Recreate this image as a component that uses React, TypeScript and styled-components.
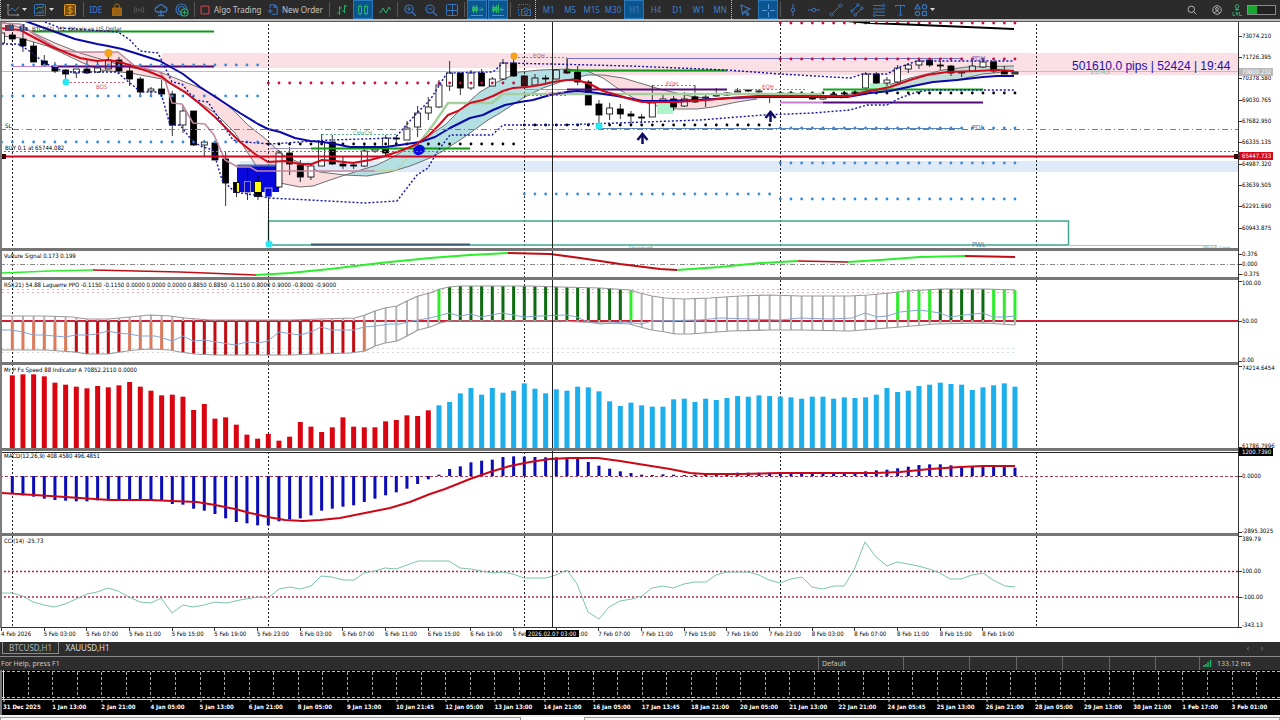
import React from "react";
import styled, { createGlobalStyle } from "styled-components";

const UI = '"Noto Sans", "Open Sans", sans-serif';
const CHART = '"DejaVu Sans Condensed", "DejaVu Sans", sans-serif';

const GlobalStyle = createGlobalStyle`
  * { box-sizing: border-box; }
  body { margin: 0; background: #fff; font-family: ${UI}; }
  button { font: inherit; color: inherit; border: 0; background: none; padding: 0; }
`;

/* ---------- page frame ---------- */

const Page = styled.div`
  display: flex;
  flex-direction: column;
  min-height: 100vh;
  overflow: hidden;
`;

const Toolbar = styled.header`
  display: flex;
  align-items: stretch;
  height: 19px;
  background: #2b2b2b;
  color: #3f7fd0;
  font-size: 8px;
  line-height: 19px;
`;

const Grip = styled.span`
  width: 3px;
  flex: none;
  border-left: 1px dotted #c8c8c8;
`;

const Divider = styled.span`
  width: 3px;
  flex: none;
  border: solid #2b2b2b;
  border-width: 2px 1px;
  background: #585858;
`;

const Group = styled.div<{ $width: number }>`
  display: grid;
  grid-auto-flow: column;
  grid-auto-columns: 1fr;
  justify-items: center;
  width: ${(p) => p.$width}px;
  flex: none;
`;

const Row = styled.div<{ $width: number }>`
  display: flex;
  align-items: center;
  padding-left: 3px;
  gap: 2px;
  width: ${(p) => p.$width}px;
  flex: none;
`;

const Tool = styled.button<{ $on?: boolean }>`
  display: flex;
  align-items: center;
  justify-content: center;
  width: 20px;
  height: 19px;
  white-space: nowrap;
  background: ${(p) => (p.$on ? "#0b568f" : "transparent")};
  box-shadow: ${(p) => (p.$on ? "inset 0 0 0 1px #2a78b8" : "none")};
`;

const DropTool = styled.button`
  display: flex;
  align-items: center;
  gap: 2px;
  width: 25px;
  height: 19px;
`;

const TextTool = styled.button<{ $width: number }>`
  display: flex;
  align-items: center;
  gap: 4px;
  padding-left: 4px;
  width: ${(p) => p.$width}px;
  flex: none;
  color: #c4c4c4;
  white-space: nowrap;
`;

const RightTools = styled.div`
  display: flex;
  align-items: center;
  gap: 5px;
  margin-left: auto;
  padding-right: 4px;
`;

const Charts = styled.main`
  border-top: 2px solid #bdbdbd;
  box-shadow: inset 0 1px #5a5a5a;
  padding-top: 1px;
  background: #fff;
`;

const Panel = styled.section<{ $height: number }>`
  display: grid;
  grid-template-columns: minmax(0, 1fr) 42px;
  grid-template-rows: minmax(0, 1fr);
  height: ${(p) => p.$height}px;
`;

const Plot = styled.div<{ $last?: boolean }>`
  min-height: 0;
  border-left: 2px solid #7c7c7c;
  border-bottom: ${(p) => (p.$last ? "1px solid #333" : "3px solid #757575")};
`;

const Scale = styled.div`
  min-height: 0;
  border-left: 1px solid #333;
`;

const Canvas = styled.svg<{ $free?: boolean }>`
  display: block;
  width: 100%;
  height: 100%;
  overflow: ${(p) => (p.$free ? "visible" : "hidden")};
`;

const Label = styled.text<{ $color?: string; $size?: number; $bold?: boolean; $arial?: boolean }>`
  font-family: ${(p) => (p.$arial ? '"Liberation Sans", sans-serif' : CHART)};
  font-size: ${(p) => p.$size ?? 6}px;
  font-weight: ${(p) => (p.$bold ? 700 : 400)};
  fill: ${(p) => p.$color ?? "#000"};
`;

const TimeAxis = styled.div`
  height: 14px;
`;

const Tabs = styled.nav`
  display: flex;
  align-items: stretch;
  height: 15px;
  padding: 0 16px 2px 2px;
  background: #2d2d2d;
  border-bottom: 1px solid #8a8a8a;
  color: #d6d6d6;
  font-size: 8px;
  line-height: 10px;
`;

const Tab = styled.button<{ $on?: boolean }>`
  width: 57px;
  border: ${(p) => (p.$on ? "1px solid #8c8c8c" : "0")};
  border-top-width: 0;
  color: ${(p) => (p.$on ? "#b4b4b4" : "#dedede")};
`;

const TabArrows = styled.div`
  display: flex;
  gap: 10px;
  margin-left: auto;
  color: #858585;
  button { width: 4px; }
`;

const Status = styled.footer`
  display: flex;
  height: 13px;
  background: #2d2d2d;
  color: #c4c4c4;
  font-size: 7px;
  line-height: 13px;
`;

const Cell = styled.span<{ $width?: number }>`
  display: flex;
  align-items: center;
  gap: 5px;
  flex: ${(p) => (p.$width ? `0 0 ${p.$width}px` : "1 1 auto")};
  padding-left: ${(p) => (p.$width ? 3 : 1)}px;
  border-left: ${(p) => (p.$width ? "1px solid #666" : "0")};
`;

const LowerChart = styled.section`
  height: 45px;
  background: #000;
  border-left: 2px solid #777;
`;

const BottomEdge = styled.div`
  display: grid;
  grid-template-columns: 521px 63px 1fr;
  flex: 1 0 5px;
  padding-top: 2px;
  background: #f1f1ee;
`;

const EdgeTab = styled.span<{ $blank?: boolean }>`
  background: ${(p) => (p.$blank ? "#fff" : "#f6f6f4")};
  border: ${(p) => (p.$blank ? "0" : "1px solid #999")};
  border-bottom: 0;
`;

/* ---------- icons ---------- */

const BLUE = "#3a74bf";
const GREEN = "#25b36b";

function Icon({ children, size = 14, color = BLUE, width = 1 }: {
  children: React.ReactNode; size?: number; color?: string; width?: number;
}) {
  return (
    <svg width={size} height={size} viewBox="0 0 14 14" fill="none" stroke={color} strokeWidth={width} aria-hidden="true">
      {children}
    </svg>
  );
}

const Caret = () => (
  <svg width="5" height="3" viewBox="0 0 5 3" aria-hidden="true"><path d="M0 0h5L2.5 3z" fill="#d8d8d8" /></svg>
);

const icons = {
  line: <Icon color="#8d8d8d"><path d="M2 1v11h11M1 3l1-2 1 2M11 11l2 1-2 1" /><path stroke={BLUE} d="M3 8l3-3 3 3 4-4" /></Icon>,
  indicator: <Icon><rect x="1.500" y="1.500" width="11" height="11" rx="1" /><path stroke={GREEN} d="M3 6l3-2 2 1 3-2" /><path d="M4 11V9M6 11V8M8 11V8M10 11V6" /></Icon>,
  dollar: <Icon color="#e39a1c"><rect x="1.500" y="1.500" width="11" height="11" rx="1" fill="#7a4f0a" /><path d="M9.500 4.800C9 4 5 3.600 5 5.500s4.300 1 4.300 3S5 10.300 4.500 9.200M7 2.800v8.400" /></Icon>,
  bag: <Icon color="#a8690f"><path d="M2.500 5h9v7.500h-9z" fill="#9a6212" /><path d="M4.500 7V3.500a2.500 2.500 0 015 0V7" /></Icon>,
  signal: <Icon size={12} color="#5e5e5e"><circle cx="7" cy="7" r="1" /><path d="M4.500 4.500a4 4 0 000 5M9.500 4.500a4 4 0 010 5M2.500 3.500a6 6 0 000 7M11.500 3.500a6 6 0 010 7" /></Icon>,
  cloud: <Icon width={1.3}><path d="M3.500 9a2.500 2.500 0 01.2-5 3.500 3.500 0 016.600 0 2.500 2.500 0 01.2 5zM7 7v5M4 12.500h6" /></Icon>,
  globe: <Icon width={1.2}><circle cx="6.500" cy="6.500" r="5.500" /><circle cx="6.500" cy="6.500" r="3" /><circle cx="9.500" cy="9.500" r="3.500" stroke={GREEN} fill="#2b2b2b" /><path stroke={GREEN} d="M9.500 7.500v4M7.500 9.500h4" /></Icon>,
  algo: <Icon size={10} color="#b84048" width={1.8}><rect x="1.500" y="1.500" width="11" height="11" rx="1" /></Icon>,
  order: <Icon size={11} width={1.4}><path d="M4 5V1h6l3 3v9H6M9 1v3h4M1 9h6M4 6v6" /></Icon>,
  bars: <Icon color={GREEN}><path d="M4.500 3v9M2 10h2.500M4.500 5H7M9.500 2v8M7 8h2.500M9.500 3H12" /></Icon>,
  candles: <Icon color={GREEN}><rect x="2.500" y="3.500" width="3" height="7" /><rect x="8.500" y="3.500" width="3" height="7" /><path d="M4 1.500v2M4 10.500v2M10 1.500v2M10 10.500v2" /></Icon>,
  zigzag: <Icon color={GREEN}><path d="M1 9h2l2-4 3 5 3-6 1.500 3" /></Icon>,
  zoomIn: <Icon width={1.2}><circle cx="6" cy="6" r="4" /><path d="M9 9l4 4M4 6h4M6 4v4" /></Icon>,
  zoomOut: <Icon width={1.2}><circle cx="6" cy="6" r="4" /><path d="M9 9l4 4M4 6h4" /></Icon>,
  tiles: <Icon><rect x="1.500" y="1.500" width="11" height="11" rx="1" /><path d="M7.500 1.500v11M1.500 7.500h11" /></Icon>,
  shift: <Icon color={GREEN}><path d="M3.500 2v8M6.500 2v8M2.500 4h2v4h-2zM5.500 4h2v4h-2zM9 6.500h4M11 4.500l2 2-2 2" /><path stroke="#4b93dc" d="M1 12.500h12" /></Icon>,
  scroll: <Icon color={GREEN}><path d="M2.500 2v8M5.500 2v8M1.500 4h2v4h-2zM4.500 4h2v4h-2zM9 6.500h4M11 4.500l-2 2 2 2M7.500 1v9" /><path stroke="#4b93dc" d="M1 12.500h12" /></Icon>,
  camera: <Icon><path d="M1.500 7V1.500h11V5M1.500 7v5.500h2" strokeDasharray="1 1" /><path d="M4.500 6.500h2L7.500 5h2l1 1.500h3v6h-9z" /><circle cx="9" cy="9.500" r="1.800" /></Icon>,
  cursor: <Icon width={1.2}><path d="M3 2l9 4-4 1.500 3 4-1.500 1-3-4-2 3z" /></Icon>,
  cross: <Icon color="#5a9be0"><path d="M7.500 1v5M7.500 9v5M1 7.500h5M9 7.500h5" /></Icon>,
  vline: <Icon><path d="M7 1v4M7 9v4" /><circle cx="7" cy="7" r="1.800" /></Icon>,
  hline: <Icon><path d="M1 7h4M9 7h4" /><circle cx="7" cy="7" r="1.800" /></Icon>,
  trend: <Icon><circle cx="2.500" cy="11.500" r="1.500" /><circle cx="11.500" cy="2.500" r="1.500" /><path d="M3.500 10.500l7-7" /></Icon>,
  channel: <Icon><circle cx="2" cy="8" r="1.200" /><circle cx="8" cy="2" r="1.200" /><path d="M3 7l4-4M6 11l5-5" /><circle cx="5.200" cy="12" r="1.200" /><circle cx="12" cy="5.200" r="1.200" /></Icon>,
  fibo: <Icon><path d="M1 2.500h9M1 6h12M1 9h12M4 12.500h9" /><circle cx="11.500" cy="2.500" r="1.200" /><circle cx="2.500" cy="12.200" r="1.200" /></Icon>,
  text: <Icon><path d="M2.500 4V2.500h9V4M7.500 2.500v9.500M5.500 12h4" /></Icon>,
  shapes: <Icon width={1.2}><path d="M3.500 1.500L6 6H1z" /><circle cx="10.500" cy="3.800" r="2.200" /><circle cx="3.500" cy="10.500" r="2.200" /><rect x="8.500" y="8.500" width="4" height="4" /></Icon>,
  search: <Icon size={10} color="#bdbdbd" width={1.3}><circle cx="6" cy="6" r="4.500" /><path d="M9.500 9.500L13 13" /></Icon>,
  user: <Icon size={10} color="#bdbdbd" width={1.3}><circle cx="7" cy="7" r="6" /><circle cx="7" cy="5.500" r="2" /><path d="M3.500 11.500c1-4 6-4 7 0" /></Icon>,
};

/* ---------- chart data ---------- */

type Pt = [number, number];
const barX = (i: number) => 12.3 + (i * 32) / 3;
const pts = (a: Pt[]) => a.map((p) => p.join(",")).join(" ");

// index, body top, body bottom, wick top, wick bottom, fill
type Candle = [number, number, number, number, number, string];
const K = "#000", W = "#fff";
const candles: Candle[] = [
  [-1, 33, 43, 30, 44, W], [0, 35, 39, 33, 42, K], [1, 39, 46, 33, 52, K], [2, 46, 62, 42, 62, K], [3, 61, 65, 55, 66, K],
  [4, 66, 71, 62, 73, K], [5, 70, 74, 69, 82, K], [6, 69, 73, 69, 78, W], [7, 69, 73, 60, 74, K], [8, 68, 72, 60, 73, W],
  [9, 60, 69, 53, 69, "#f6c9cd"], [10, 60, 71, 57, 74, K], [11, 71, 79, 64, 86, K], [12, 79, 92, 77, 96, K], [13, 89, 91, 87, 97, W],
  [14, 89, 94, 80, 96, K], [15, 94, 125, 91, 136, K], [16, 111, 125, 105, 133, W], [17, 111, 145, 111, 146, K], [18, 142, 145, 140, 157, W],
  [19, 143, 160, 141, 160, K], [20, 159, 183, 152, 206, K], [25, 153, 187, 150, 188, W], [26, 153, 164, 147, 175, K], [27, 165, 177, 160, 182, K],
  [28, 166, 177, 164, 180, W], [29, 142, 166, 134, 166, W], [30, 142, 164, 135, 165, K], [31, 164, 166, 156, 169, K], [32, 165, 166, 163, 169, K],
  [33, 151, 166, 145, 167, W], [34, 149, 151, 145, 153, W], [35, 138, 149, 135, 155, W], [35, 148, 153, 148, 155, K], [36, 138, 139, 136, 143, K],
  [37, 128, 140, 121, 140, W], [38, 113, 127, 106, 137, W], [39, 107, 113, 97, 120, W], [40, 85, 107, 80, 108, W], [41, 73, 86, 61, 91, W],
  [42, 73, 88, 73, 95, K], [43, 73, 88, 70, 90, W], [44, 73, 86, 69, 86, K], [45, 79, 86, 77, 86, W], [46, 63, 79, 59, 80, W],
  [47, 63, 76, 58, 77, K], [48, 76, 86, 75, 86, "#3a1018"], [49, 78, 85, 74, 86, "#bfe3e6"], [50, 78, 79, 75, 83, K], [51, 70, 79, 69, 79, "#c8eaec"],
  [52, 70, 73, 58, 74, "#3a1018"], [53, 72, 82, 66, 85, K], [54, 82, 105, 80, 105, K], [55, 104, 115, 100, 125, K], [56, 108, 114, 103, 120, W],
  [57, 109, 114, 104, 119, K], [58, 114, 116, 111, 125, K], [59, 117, 117, 114, 123, K], [60, 103, 117, 85, 117, W], [61, 99, 101, 94, 103, W],
  [62, 99, 107, 96, 111, K], [63, 99, 106, 92, 107, W], [64, 97, 102, 85, 103, K], [65, 97, 98, 95, 107, W], [66, 95, 96, 88, 97, W],
  [67, 93, 95, 92, 96, K], [68, 91, 92, 88, 92, W], [69, 90, 91, 89, 92, K], [70, 91, 92, 89, 93, W], [71, 96, 97, 95, 103, K],
  [72, 93, 94, 91, 95, W], [73, 93, 94, 91, 95, W], [74, 94, 95, 92, 96, K], [75, 97, 99, 95, 100, K], [76, 97, 99, 95, 100, W],
  [77, 94, 95, 92, 96, W], [78, 93, 94, 91, 96, W], [79, 92, 93, 90, 94, W], [80, 74, 88, 72, 90, W], [81, 74, 83, 72, 84, K],
  [82, 80, 83, 77, 86, W], [83, 68, 82, 65, 83, W], [84, 65, 69, 63, 73, W], [85, 61, 65, 60, 69, W], [86, 60, 65, 59, 67, K],
  [87, 65, 66, 61, 70, K], [88, 66, 73, 65, 76, K], [89, 72, 73, 71, 77, W], [90, 66, 71, 58, 72, "#cfe6e2"], [91, 62, 67, 60, 68, W],
  [92, 62, 71, 61, 73, K], [93, 71, 74, 66, 74, K], [94, 72, 74, 72, 74, "#666"],
];

const blueMa: Pt[] = [[25, 21], [50, 30], [75, 39], [97, 44], [108, 46], [122, 49], [135, 53], [160, 61], [183, 74], [200, 87], [217, 98], [240, 113], [258, 124], [268, 129], [280, 132], [295, 138], [310, 141], [323, 142], [335, 144], [350, 147], [365, 147], [385, 147], [400, 145], [420, 142], [435, 137], [450, 128], [470, 118], [483, 115], [493, 110], [505, 105], [520, 102], [533, 100], [550, 95], [567, 92], [577, 91], [590, 92], [617, 96], [643, 101], [663, 101], [697, 100], [730, 98], [763, 97], [813, 97], [847, 97], [870, 93], [890, 91], [913, 86], [933, 82], [957, 80], [983, 77], [997, 76], [1014, 76]];
const redMa: Pt[] = [[0, 28], [20, 30], [35, 38], [50, 46], [67, 53], [80, 58], [97, 61], [108, 60], [120, 62], [135, 67], [150, 72], [162, 77], [170, 83], [185, 92], [200, 104], [215, 117], [228, 130], [240, 142], [255, 154], [268, 162], [285, 161], [300, 164], [312, 164], [322, 160], [335, 161], [353, 163], [370, 160], [385, 156], [400, 151], [415, 145], [428, 136], [439, 125], [448, 115], [458, 111], [470, 103], [483, 100], [493, 96], [503, 91], [513, 88], [527, 87], [540, 85], [553, 82], [567, 80], [577, 80], [590, 84], [603, 91], [617, 95], [630, 99], [642, 102], [657, 102], [677, 102], [707, 100], [730, 98], [757, 96], [850, 96], [870, 91], [890, 87], [910, 80], [927, 75], [947, 72], [977, 71], [997, 70], [1014, 71]];
const mauve: Pt[] = [[2, 23], [20, 24], [40, 38], [60, 50], [75, 52], [118, 52], [135, 66], [160, 72], [165, 80], [172, 103], [182, 104], [193, 123], [205, 124], [214, 135], [225, 160], [238, 167], [250, 167], [257, 171], [375, 171]];
const paleGreen: Pt[] = [[420, 142], [433, 125], [448, 103], [492, 103], [503, 94], [823, 94]];
const upperA: Pt[] = [[2, 22], [27, 30], [55, 43], [80, 53], [110, 62], [133, 68], [160, 72], [180, 80], [200, 88], [217, 97], [233, 110], [248, 125], [267, 140], [283, 155], [300, 163], [320, 172], [345, 175]];
const lowerA: Pt[] = [[2, 36], [20, 38], [47, 46], [60, 52], [83, 63], [100, 70], [130, 73], [162, 79], [185, 93], [215, 113], [235, 133], [257, 167], [267, 177], [280, 183], [300, 187], [313, 186], [333, 179], [345, 175]];
const upperB: Pt[] = [[345, 175], [377, 165], [393, 157], [413, 145], [430, 135], [445, 125], [463, 107], [480, 92], [497, 82], [520, 72], [540, 70], [567, 69], [587, 71], [596, 75]];
const lowerB: Pt[] = [[345, 175], [367, 176], [390, 172], [410, 166], [430, 158], [443, 151], [463, 138], [488, 120], [500, 113], [523, 98], [543, 88], [563, 81], [587, 75], [596, 75]];
const upperC: Pt[] = [[596, 75], [603, 75], [623, 78], [643, 84], [663, 90], [690, 96], [713, 99], [757, 97]];
const lowerC: Pt[] = [[596, 75], [603, 78], [620, 90], [637, 100], [657, 106], [677, 109], [697, 109], [713, 107], [737, 102], [757, 99]];
const upperD: Pt[] = [[840, 96], [870, 90], [895, 83], [910, 78], [927, 74], [943, 70], [967, 67], [1014, 66]];
const lowerD: Pt[] = [[840, 98], [870, 93], [890, 91], [913, 86], [933, 82], [957, 80], [983, 74], [1014, 71]];
const dottedUp: Pt[] = [[45, 22], [60, 28], [118, 32], [130, 40], [140, 51], [158, 53], [163, 63], [172, 82], [182, 84], [195, 100], [208, 102], [220, 120], [233, 140], [245, 142], [270, 144], [300, 142], [330, 140], [395, 138], [408, 123], [417, 113], [430, 100], [447, 73], [493, 72], [503, 63], [550, 64], [630, 66], [727, 70], [780, 74], [850, 78], [863, 74], [887, 74], [900, 67], [917, 61], [1014, 61]];
const dottedLow: Pt[] = [[2, 44], [18, 44], [28, 50], [37, 57], [45, 63], [55, 68], [65, 72], [117, 72], [125, 79], [135, 87], [140, 92], [160, 92], [163, 100], [170, 125], [180, 125], [190, 138], [200, 146], [213, 150], [222, 180], [235, 192], [260, 196], [268, 198], [310, 200], [365, 203], [397, 201], [417, 175], [428, 168], [437, 152], [450, 135], [492, 135], [503, 125], [560, 125], [617, 123], [700, 120], [763, 115], [813, 113], [850, 110], [867, 105], [887, 105], [900, 98], [917, 92], [930, 90], [1014, 90]];

const SKY = "#3a8ad8", CRIMSON = "#c40f3c";
// y, first bar, last bar, colour
const dotRows: [number, number, number, string][] = [
  [65, 0, 23, SKY], [96, -1, 23, SKY], [142, -1, 23, SKY], [83, 24, 47, CRIMSON], [144, 24, 47, K], [125, 48, 71, K], [194, 48, 71, SKY],
  [23, 72, 94, CRIMSON], [59, 72, 94, CRIMSON], [93, 72, 94, K], [128, 72, 94, SKY], [163, 72, 94, SKY], [199, 72, 94, SKY],
];

// x1, x2, y, colour, thickness
const levels: [number, number, number, string, number][] = [
  [12, 58, 66, "#c77fd0", 1], [58, 214, 66, "#520a78", 2], [30, 214, 31, "#0f9a14", 2], [270, 311, 148, "#9d93b8", 1], [311, 470, 148, "#0f9a14", 2],
  [524, 567, 89, "#c77fd0", 1], [567, 727, 89, "#520a78", 2], [567, 727, 70, "#0f9a14", 2], [780, 823, 102, "#c77fd0", 2], [823, 983, 102, "#520a78", 2],
  [823, 983, 89, "#0fa814", 2], [567, 963, 58, "#7a6fc4", 1], [596, 963, 128, "#5a84b4", 1], [1068, 1217, 245, "#9ccfc4", 1],
];

const LIME = "#2dee2d", DARK = "#0c6b10", GRAY = "#b4b4b4", RED = "#c00d14", SALMON = "#dd7a5c";
const rsiColor = (i: number) => {
  if (i < 6 || (i > 10 && i < 16) || i === 33) return SALMON;
  if (i < 33) return RED;
  if (i < 40 || (i > 58 && i < 83)) return GRAY;
  if (i === 40 || i === 58 || (i > 82 && i < 87) || i > 91) return LIME;
  return DARK;
};
const rsiUpper: Pt[] = [[2, 316], [45, 316], [72, 317], [87, 319], [108, 319], [130, 317], [150, 315], [170, 316], [185, 318], [210, 320], [290, 320], [320, 319], [355, 318], [365, 315], [375, 311], [385, 308], [397, 306], [407, 301], [418, 296], [430, 293], [440, 289], [449, 287], [460, 286], [530, 286], [560, 287], [600, 288], [630, 290], [640, 293], [652, 296], [665, 298], [683, 299], [710, 298], [740, 296], [770, 295], [800, 296], [850, 296], [868, 295], [890, 293], [905, 291], [925, 290], [940, 289], [985, 289], [1015, 290]];
const rsiLower: Pt[] = [[2, 350], [45, 350], [75, 352], [87, 354], [108, 354], [120, 352], [135, 350], [150, 349], [170, 350], [180, 352], [195, 354], [215, 355], [290, 355], [320, 354], [350, 353], [365, 351], [375, 346], [385, 343], [397, 341], [407, 336], [418, 330], [430, 327], [440, 323], [449, 321], [560, 321], [580, 322], [630, 324], [640, 327], [652, 330], [665, 332], [675, 334], [690, 334], [730, 331], [765, 330], [800, 330], [850, 331], [875, 329], [900, 327], [935, 324], [985, 323], [1015, 325]];
const rsiLine: Pt[] = [[2, 330], [12, 330], [23, 332], [33, 335], [44, 335], [65, 337], [76, 335], [87, 335], [97, 334], [108, 331], [118, 333], [129, 334], [140, 336], [155, 336], [163, 338], [172, 341], [183, 336], [193, 341], [204, 340], [235, 345], [247, 342], [258, 343], [268, 341], [279, 332], [300, 335], [311, 332], [321, 327], [332, 330], [354, 330], [364, 327], [375, 326], [390, 324], [400, 324], [412, 321], [430, 318], [449, 313], [460, 316], [471, 314], [481, 317], [502, 313], [524, 317], [540, 316], [567, 315], [577, 317], [588, 322], [600, 324], [625, 322], [642, 324], [652, 321], [700, 320], [720, 318], [780, 320], [800, 318], [830, 319], [852, 318], [865, 313], [877, 317], [887, 316], [900, 312], [920, 310], [940, 313], [950, 317], [965, 315], [983, 313], [993, 317], [1005, 317], [1015, 316]];

const at = (line: Pt[], x: number) => {
  const k = Math.max(1, line.findIndex((p) => p[0] >= x));
  const [a, b] = [line[k - 1], line[k]];
  return a[1] + ((b[1] - a[1]) * (x - a[0])) / (b[0] - a[0]);
};

// bar heights in thirds of a pixel
const speed = [218, 221, 221, 215, 196, 190, 184, 179, 186, 182, 188, 198, 184, 172, 158, 160, 154, 114, 132, 88, 92, 70, 40, 28, 42, 22, 34, 78, 64, 48, 62, 92, 64, 62, 62, 80, 84, 98, 96, 113,
  128, 138, 164, 180, 160, 180, 166, 172, 194, 178, 164, 176, 172, 184, 182, 170, 140, 126, 136, 128, 124, 124, 146, 148, 138, 148, 144, 150, 156, 154, 158, 156, 154, 152, 148, 154, 154, 148, 152, 150,
  152, 160, 180, 168, 172, 186, 190, 196, 192, 190, 174, 182, 188, 194, 184];
const macd = [-51, -58, -62, -68, -72, -74, -76, -76, -73, -70, -70, -71, -70, -71, -72, -84, -86, -98, -104, -114, -127, -138, -142, -148, -148, -136, -130, -127, -118, -104, -98, -92, -88, -78, -68, -58, -49, -38, -24, -10,
  4, 21, 29, 41, 46, 49, 57, 59, 58, 57, 56, 56, 55, 53, 42, 31, 22, 14, 9, 4, 3, 5, 4, 3, 4, 5, 7, 8, 10, 10, 10, 10, 9, 9, 9, 8, 8, 8, 7, 7,
  14, 17, 19, 23, 28, 33, 35, 35, 32, 30, 29, 29, 28, 27, 25];
const signal: Pt[] = [[2, 493], [50, 496], [80, 498], [110, 500], [150, 500], [172, 501], [197, 502], [215, 505], [235, 509], [250, 513], [268, 517], [285, 520], [303, 521], [320, 520], [340, 518], [360, 514], [390, 508], [410, 502], [430, 494], [445, 489], [470, 479], [490, 472], [510, 466], [530, 462], [550, 459], [570, 458], [598, 458], [620, 461], [645, 465], [670, 469], [690, 473], [705, 474], [740, 474], [780, 473], [875, 473], [900, 472], [930, 469], [960, 467], [983, 466], [1015, 466]];
const cci: Pt[] = [[2, 593], [12, 593], [23, 596], [33, 602], [44, 605], [54, 607], [65, 604], [76, 599], [87, 594], [97, 592], [108, 588], [118, 591], [129, 597], [140, 602], [151, 603], [161, 598], [172, 613], [183, 605], [193, 607], [204, 605], [215, 602], [226, 603], [240, 600], [258, 597], [268, 598], [279, 589], [290, 587], [300, 589], [311, 586], [321, 576], [332, 577], [343, 580], [354, 580], [364, 573], [375, 571], [385, 568], [396, 569], [407, 565], [418, 561], [449, 561], [460, 568], [471, 569], [492, 573], [503, 572], [513, 574], [524, 578], [546, 578], [556, 575], [567, 570], [577, 584], [588, 612], [599, 619], [609, 607], [620, 601], [632, 599], [642, 596], [652, 588], [663, 586], [673, 588], [684, 584], [695, 582], [706, 582], [716, 575], [727, 572], [748, 572], [759, 575], [769, 580], [780, 583], [791, 579], [802, 577], [812, 587], [823, 589], [834, 586], [844, 586], [854, 570], [865, 542], [876, 557], [887, 566], [897, 562], [908, 564], [918, 566], [929, 569], [940, 573], [950, 579], [961, 579], [972, 575], [983, 573], [993, 580], [1005, 586], [1015, 587]];
const vulture: { color: string; width: number; p: Pt[] }[] = [
  { color: LIME, width: 1.5, p: [[2, 273], [50, 271], [93, 270]] },
  { color: RED, width: 1.5, p: [[93, 270], [180, 272], [256, 275]] },
  { color: LIME, width: 2.2, p: [[256, 275], [290, 273], [330, 269], [380, 263], [430, 258], [470, 255], [508, 253]] },
  { color: RED, width: 2.2, p: [[508, 253], [550, 254], [580, 258], [620, 264], [660, 269], [677, 270]] },
  { color: LIME, width: 2, p: [[677, 270], [720, 267], [760, 263], [798, 261]] },
  { color: RED, width: 1.5, p: [[798, 261], [848, 262]] },
  { color: LIME, width: 2, p: [[848, 262], [880, 260], [920, 257], [965, 256]] },
  { color: RED, width: 2, p: [[965, 256], [1015, 257]] },
];

const hours = ["03:00", "07:00", "11:00", "15:00", "19:00", "23:00"];
const times = ["4 Feb 2026", ...["5 Feb", "6 Feb", "7 Feb", "8 Feb"].flatMap((d) => hours.map((h) => `${d} ${h}`))].slice(0, 24);
const lowerTimes = "31 Dec 2025|1 Jan 13:00|2 Jan 21:00|4 Jan 05:00|5 Jan 13:00|6 Jan 21:00|8 Jan 05:00|9 Jan 13:00|10 Jan 21:45|12 Jan 05:00|13 Jan 13:00|14 Jan 21:00|16 Jan 05:00|17 Jan 13:45|18 Jan 21:00|20 Jan 05:00|21 Jan 13:00|22 Jan 21:00|24 Jan 05:45|25 Jan 13:00|26 Jan 21:00|28 Jan 05:00|29 Jan 13:00|30 Jan 21:00|1 Feb 17:00|3 Feb 01:00".split("|");

/* ---------- chart pieces ---------- */

function Rule({ y, color, dash, width = 1 }: { y: number; color: string; dash?: string; width?: number }) {
  return <line x1="0" x2="110%" y1={y} y2={y} stroke={color} strokeWidth={width} strokeDasharray={dash} />;
}

function Line({ p, color, width = 1, dash }: { p: Pt[]; color: string; width?: number; dash?: string }) {
  return <polyline points={pts(p)} fill="none" stroke={color} strokeWidth={width} strokeDasharray={dash} strokeLinejoin="round" />;
}

const Days = () => (
  <>
    {[12, 268, 524, 780, 1036].map((x) => (
      <line key={x} x1={x + 0.5} x2={x + 0.5} y1="20" y2="628" stroke="#222" strokeDasharray="2 2" />
    ))}
  </>
);

interface Tick { y: number; text: string; box?: string; dy?: number }

function ChartPanel({ top, height, ticks, title, last, children }: {
  top: number; height: number; ticks: Tick[]; title?: string; last?: boolean; children: React.ReactNode;
}) {
  return (
    <Panel $height={height}>
      <Plot $last={last}>
        <Canvas role="img" aria-label={title ?? "Price chart"}>
          <g transform={`translate(-2 ${-top})`}>
            {children}
            {title && <Label x="4" y={top + 7}>{title}</Label>}
            <line x1="552.5" x2="552.5" y1="20" y2="628" stroke="#222" />
          </g>
        </Canvas>
      </Plot>
      <Scale>
        <Canvas $free>
          <g transform={`translate(0 ${-top})`}>
            {ticks.map((t) => (
              <g key={t.text}>
                {t.box ? <rect x="0" y={t.y - 4} width="34" height="8" fill={t.box} /> : <path d={`M0 ${t.y + 0.5}h3`} stroke="#333" />}
                <Label x="3" y={t.y + 2 + (t.dy ?? 0)} $color={t.box ? "#fff" : undefined}>{t.text}</Label>
              </g>
            ))}
          </g>
        </Canvas>
      </Scale>
    </Panel>
  );
}

function PriceChart() {
  const cloud = (u: Pt[], l: Pt[], fill: string) => (
    <>
      <polygon points={pts([...u, ...[...l].reverse()])} fill={fill} />
      <Line p={u} color="#6e6e6e" />
      <Line p={l} color="#6e6e6e" />
    </>
  );
  return (
    <>
      <rect x="162" y="53" width="100%" height="15" fill="#fadfe5" />
      <rect x="567" y="58" width="100%" height="17" fill="#fadfe5" />
      <rect x="240" y="161" width="100%" height="11" fill="#deeaf8" />
      <Rule y={71.5} color="#b9c2bd" />
      <polygon points={pts([...mauve.slice(0, 9), [150, 76], [100, 68], [60, 50], [2, 30]])} fill="#fbdde0" />
      {cloud(upperA, lowerA, "#fbdde0")}
      {cloud(upperB, lowerB, "#b4dfe3")}
      {cloud(upperC, lowerC, "#fbdde0")}
      {cloud(upperD, lowerD, "#c3dcd8")}
      <rect x="657" y="103" width="16" height="11" fill="#aef5cb" />
      <rect x="870" y="83" width="20" height="6" fill="#aef5cb" />
      <Days />
      <rect x="237" y="165" width="42" height="27" fill="#0808dc" />
      <path d="M237 165.500h42" stroke="#4a6fa8" strokeWidth="2" />

      <rect x="268.500" y="221" width="800" height="24" fill="none" stroke="#3fa58c" strokeWidth="1.500" />
      <path d="M311 244.500h159" stroke="#36586a" strokeWidth="2" />
      <path d="M567.500 58v12" stroke="#7a6fc4" />

      {candles.map(([i, t, b, wt, wb, fill], k) => (
        <g key={k} stroke="#000">
          <line x1={barX(i)} x2={barX(i)} y1={wt} y2={wb} strokeWidth="0.800" />
          <rect x={barX(i) - 3} y={t} width="6" height={Math.max(1, b - t)} fill={fill} strokeWidth={0.8} />
        </g>
      ))}
      <g stroke="#000" strokeWidth="0.800">
        <path d="M236.500 192v5M247.500 168v32M258 176v24M268.500 197v47" />
        <rect x="233.500" y="182.500" width="3" height="10" fill="#000" />
        <rect x="236.500" y="182.500" width="3" height="10" fill="#ff0" />
        <rect x="244.500" y="181.500" width="6" height="11" fill="#0808dc" stroke="#aab" />
        <rect x="254.500" y="181.500" width="7" height="11" fill="#ff0" />
        <rect x="254.500" y="192.500" width="7" height="4" fill="#000" />
        <rect x="265" y="188" width="7" height="9" fill="#0808dc" stroke="#dde" />
      </g>

      {levels.map(([a, b, y, c, w], k) => <path key={k} d={`M${a} ${y + 0.5}H${b}`} stroke={c} strokeWidth={w} />)}
      {dotRows.map(([y, a, b, c]) =>
        Array.from({ length: b - a + 1 }, (_, k) => <circle key={`${y}-${k}`} cx={barX(a + k)} cy={y} r="1.400" fill={c} />),
      )}
      <Line p={[[375, 171], [397, 170], [405, 160], [420, 142]]} color="#c3cf8c" />
      <Line p={paleGreen} color="#a6cfa0" width={2.5} />
      <Line p={mauve} color="#c287a0" width={1.6} />
      <Line p={dottedUp} color="#1414a8" width={1.4} dash="2 2" />
      <Line p={dottedLow} color="#1414a8" width={1.4} dash="2 2" />
      <ellipse cx="419" cy="150" rx="6" ry="5" fill="#0a0ae0" transform="rotate(-25 419 150)" />
      <Line p={blueMa} color="#0a0aa8" width={2} />
      <Line p={redMa} color="#d40a1c" width={2} />
      <Line p={[[835, 20], [870, 23], [920, 25], [1014, 29]]} color="#000" width={2} />

      <Rule y={129.5} color="#b06a5c" dash="6 3 1 3" />
      <Rule y={151.5} color="#5e8a3a" dash="2 2" />
      <Rule y={156.5} color="#cc0a22" width={2} />
      <rect x="2" y="154" width="4" height="5" fill="#3a0508" />
      <svg x="100%" overflow="visible"><rect x="-2" y="154" width="4" height="5" fill="#3a0508" /></svg>

      <g strokeDasharray="2 2" stroke="#c8687a">
        <path d="M66 82.500h60M514 57.500h53M653 85.500h42M735 89.500h70M524 95.500h43" />
        <path d="M322 134.500h75" stroke="#5cae8c" />
      </g>
      <circle cx="108.500" cy="53" r="4" fill="#f5a21a" />
      <circle cx="514" cy="56" r="3.500" fill="#f5a21a" />
      {[[66, 82], [599, 126], [269, 244]].map(([x, y]) => <circle key={x} cx={x} cy={y} r="3.500" fill="#25e8f2" />)}
      {[[642, 133], [770, 111]].map(([x, y]) => (
        <path key={x} d={`M${x + 0.5} ${y + 11}v-9m-5 5l5-6l5 6`} fill="none" stroke="#120a68" strokeWidth="2.500" />
      ))}

      <Label x="96" y="89" $color="#cf5268">BOS</Label>
      <Label x="533" y="58" $color="#cf5268">EQH</Label>
      <Label x="666" y="86" $color="#cf5268">EQH</Label>
      <Label x="762" y="89" $color="#cf5268">EQH</Label>
      <Label x="545" y="95" $color="#d48aa0">CHoCH</Label>
      <Label x="353" y="135" $color="#4fa888">CHoCH</Label>
      <Label x="972" y="61" $size={7} $color="#5a62b8">PDH</Label>
      <Label x="972" y="130" $size={7} $color="#3f74ac">PDL</Label>
      <Label x="972" y="247" $size={7} $color="#3878a0">PWL</Label>
      <Label x="629" y="250" $color="#4fa888">Discount</Label>
      <Label x="1203" y="250" $color="#4fa888">Week Low</Label>
      <Label x="1090" y="74" $size={8} $arial $color="#86c49a">19:43</Label>
      <Label x="1072" y="70" $size={12} $arial $color="#1d0fae">501610.0 pips | 52424 | 19:44</Label>

      <g>
        <rect x="5" y="25" width="9" height="6" fill="#2b5684" />
        <path d="M5 26h4M5 28h4M5 30h9" stroke="#b01828" />
        <path d="M20.500 31v-5M23.500 31v-7M26.500 31v-4" stroke="#24407c" strokeWidth="2" />
      </g>
      <Label x="32" y="31" $color="#223">BTCUSD, H1:  Bitcoin vs US Dollar</Label>
      <Label x="5" y="128">SL</Label>
      <Label x="5" y="150">BUY 0.1 at 65744.082</Label>
    </>
  );
}

const priceTicks: Tick[] = [
  ...["73074.210", "71726.395", "70378.580", "69030.765", "67682.950", "66335.135", "64987.320", "63639.505", "62291.690", "60943.875"].map((text, i) => ({
    text, y: Math.round(35.5 + (i * 64) / 3),
  })),
  { y: 72, text: "70800.232", box: "#b8b8b8" },
  { y: 156, text: "65447.733", box: "#d8081c" },
];

const bars = Array.from({ length: 95 }, (_, i) => i);

function Toolbars() {
  return (
    <Toolbar>
      <Grip />
      <Row $width={79}>
        <DropTool aria-label="Line studies">{icons.line}<Caret /></DropTool>
        <DropTool aria-label="Indicators">{icons.indicator}<Caret /></DropTool>
        <Tool aria-label="Quotes">{icons.dollar}</Tool>
      </Row>
      <Divider />
      <Group $width={108}>
        <Tool>IDE</Tool>
        <Tool aria-label="Market">{icons.bag}</Tool>
        <Tool aria-label="Signals">{icons.signal}</Tool>
        <Tool aria-label="Cloud">{icons.cloud}</Tool>
        <Tool aria-label="Virtual hosting">{icons.globe}</Tool>
      </Group>
      <Divider />
      <TextTool $width={67}>{icons.algo}Algo Trading</TextTool>
      <TextTool $width={65}>{icons.order}New Order</TextTool>
      <Divider />
      <Group $width={65}>
        <Tool aria-label="Bar chart">{icons.bars}</Tool>
        <Tool $on aria-label="Candlesticks">{icons.candles}</Tool>
        <Tool aria-label="Line chart">{icons.zigzag}</Tool>
      </Group>
      <Divider />
      <Group $width={64}>
        <Tool aria-label="Zoom in">{icons.zoomIn}</Tool>
        <Tool aria-label="Zoom out">{icons.zoomOut}</Tool>
        <Tool aria-label="Tile windows">{icons.tiles}</Tool>
      </Group>
      <Divider />
      <Group $width={43}>
        <Tool $on aria-label="Auto scroll">{icons.shift}</Tool>
        <Tool $on aria-label="Chart shift">{icons.scroll}</Tool>
      </Group>
      <Divider />
      <Group $width={23}><Tool aria-label="Screenshot">{icons.camera}</Tool></Group>
      <Grip />
      <Group $width={193}>
        {["M1", "M5", "M15", "M30", "H1", "H4", "D1", "W1", "MN"].map((t) => <Tool key={t} $on={t === "H1"}>{t}</Tool>)}
      </Group>
      <Grip />
      <Group $width={45}>
        <Tool aria-label="Cursor">{icons.cursor}</Tool>
        <Tool $on aria-label="Crosshair">{icons.cross}</Tool>
      </Group>
      <Divider />
      <Group $width={129}>
        <Tool aria-label="Vertical line">{icons.vline}</Tool>
        <Tool aria-label="Horizontal line">{icons.hline}</Tool>
        <Tool aria-label="Trendline">{icons.trend}</Tool>
        <Tool aria-label="Channel">{icons.channel}</Tool>
        <Tool aria-label="Fibonacci">{icons.fibo}</Tool>
        <Tool aria-label="Text">{icons.text}</Tool>
      </Group>
      <Row $width={28}><DropTool aria-label="Shapes">{icons.shapes}<Caret /></DropTool></Row>
      <RightTools>
        <Tool aria-label="Search">{icons.search}</Tool>
        <Tool aria-label="Account">{icons.user}</Tool>
        <svg width="10" height="12" viewBox="0 0 10 12" aria-label="Level" role="img">
          <circle cx="5" cy="2.500" r="1.800" fill="none" stroke={GREEN} /><path d="M5 4v3M3 5.500h4" stroke={GREEN} />
          <path d="M1 8v3.500h2M4 8l1 3.500L6 8M7.500 8v3.500H10" fill="none" stroke={GREEN} strokeWidth="0.900" />
        </svg>
        <svg width="29" height="10" viewBox="0 0 29 10" aria-label="Connection" role="img">
          <rect x="0.500" y="0.500" width="28" height="9" fill="#222" stroke="#8a8a8a" /><rect x="1" y="1" width="9" height="8" fill="#18a832" />
        </svg>
      </RightTools>
    </Toolbar>
  );
}

export default function App() {
  return (
    <Page>
      <GlobalStyle />
      <Toolbars />
      <Charts>
        <ChartPanel top={22} height={229} ticks={priceTicks}><PriceChart /></ChartPanel>

        <ChartPanel top={251} height={29} title="Vulture Signal 0.173 0.199"
          ticks={[{ y: 254, text: "0.376" }, { y: 264, text: "0.000" }, { y: 274, text: "-0.375" }]}>
          <Days />
          <Rule y={264.5} color="#8a8a8a" dash="5 2 1 2" />
          {vulture.map((v, k) => <Line key={k} p={v.p} color={v.color} width={v.width} />)}
        </ChartPanel>

        <ChartPanel top={280} height={85}
          title="RSI(21) 54.88 Laguerre PPO -0.1150 -0.1150 0.0000 0.0000 0.0000 0.8850 0.8850 -0.1150 0.8000 0.9000 -0.8000 -0.9000"
          ticks={[{ y: 281, text: "100.00", dy: 2 }, { y: 321, text: "50.00" }, { y: 361, text: "0.00", dy: -1 }]}>
          <path d="M2 289.500H1014M2 292.500H1014" stroke="#e3b4ba" strokeDasharray="2 3" />
          <path d="M2 348.500H1014M2 352.500H1014" stroke="#d3dcdc" strokeDasharray="2 3" />
          <Days />
          <Rule y={321} color="#cf2038" width={2} />
          {bars.map((i) => {
            const x = barX(i), u = at(rsiUpper, x), l = at(rsiLower, x), c = rsiColor(i);
            const up = c === LIME || c === DARK;
            return (
              <g key={i}>
                <rect x={x - 1} y={u} width="2" height={l - u} fill={GRAY} />
                {c !== GRAY && <rect x={x - 1.5} y={up ? u : 321} width="3" height={up ? Math.max(0, 320 - u) : Math.max(0, l - 321)} fill={c} />}
              </g>
            );
          })}
          <Line p={rsiUpper} color="#999" width={1.2} />
          <Line p={rsiLower} color="#999" width={1.2} />
          <Line p={rsiLine} color="#83a5d2" />
        </ChartPanel>

        <ChartPanel top={365} height={86} title="Mr P Fx Speed 88 Indicator A 70852.2110 0.0000"
          ticks={[{ y: 366, text: "74214.6454", dy: 2 }, { y: 447, text: "61786.7996", dy: -1 }]}>
          <Days />
          {bars.map((i) => (
            <rect key={i} x={barX(i) - 2.5} y={448 - speed[i] / 3} width="5" height={speed[i] / 3} fill={i < 40 ? "#d80410" : "#1daeec"} />
          ))}
        </ChartPanel>

        <ChartPanel top={451} height={85} title="MACD(12,26,9) 408.4580 496.4851"
          ticks={[{ y: 452, text: "1200.7390", box: "#000" }, { y: 476, text: "0.0000" }, { y: 532, text: "-2895.3025", dy: -1 }]}>
          <Days />
          <Rule y={452.5} color="#222" />
          <Rule y={476.5} color="#a83c50" dash="3 2" />
          {bars.map((i) => {
            const h = macd[i] / 3;
            return <rect key={i} x={barX(i) - 1.5} y={h > 0 ? 476 - h : 476} width="3" height={Math.abs(h)} fill="#0b0bb8" />;
          })}
          <Line p={signal} color="#cc0818" width={2} />
        </ChartPanel>

        <ChartPanel top={536} height={92} last title="CCI(14) -25.73"
          ticks={[{ y: 536, text: "389.79", dy: 3 }, { y: 571, text: "100.00" }, { y: 597, text: "-100.00" }, { y: 627, text: "-343.13", dy: -2 }]}>
          <Days />
          <Rule y={571.5} color="#b3263c" dash="2 2" width={1.5} />
          <Rule y={597} color="#b3263c" dash="2 2" width={1.5} />
          <Line p={cci} color="#7cc4ae" />
        </ChartPanel>

        <TimeAxis>
          <Canvas role="img" aria-label="Time axis">
            {times.map((t, i) => {
              const x = 1 + (i * 128) / 3;
              return (
                <g key={t}>
                  <path d={`M${Math.round(x)}.5 0v3`} stroke="#333" />
                  <Label x={x} y="8">{t}</Label>
                </g>
              );
            })}
            <rect x="526" y="2" width="53" height="7" fill="#000" />
            <Label x="528" y="8" $color="#fff">2026.02.07 03:00</Label>
          </Canvas>
        </TimeAxis>
      </Charts>

      <Tabs>
        <Tab $on>BTCUSD,H1</Tab>
        <Tab>XAUUSD,H1</Tab>
        <TabArrows>
          <button aria-label="Previous">‹</button>
          <button aria-label="Next">›</button>
        </TabArrows>
      </Tabs>
      <Status>
        <Cell>For Help, press F1</Cell>
        <Cell $width={85}>Default</Cell>
        {[66, 47, 46, 47, 46, 44].map((w, i) => <Cell key={i} $width={w} />)}
        <Cell $width={81}>
          <svg width="9" height="7" viewBox="0 0 9 7" aria-hidden="true"><path d="M1 7V5M3 7V4M5 7V2M7.500 7V0" stroke={GREEN} strokeWidth="1.500" /></svg>
          133.12 ms
        </Cell>
      </Status>
      <LowerChart>
        <Canvas role="img" aria-label="Second chart time axis">
          <Rule y={1.5} color="#b8b8b8" dash="3 2" />
          <Rule y={27.5} color="#b8b8b8" dash="3 2" />
          <g stroke="#a0a0a0" strokeDasharray="3 2">
            {Array.from({ length: 52 }, (_, i) => {
              const x = Math.round(1 + i * 24.57) + 0.5;
              return <path key={i} d={`M${x} 2V28`} />;
            })}
          </g>
          <path d="M1.500 0v29" stroke="#ddd" />
          <Rule y={29.5} color="#ddd" />
          {lowerTimes.map((t, i) => (
            <g key={t}>
              <path d={`M${Math.round(2 + i * 49.14)} 29v3`} stroke="#ddd" />
              <Label x={1 + i * 49.14} y="39" $bold $color="#fff">{t}</Label>
            </g>
          ))}
        </Canvas>
      </LowerChart>
      <BottomEdge><EdgeTab /><EdgeTab $blank /><EdgeTab /></BottomEdge>
    </Page>
  );
}
